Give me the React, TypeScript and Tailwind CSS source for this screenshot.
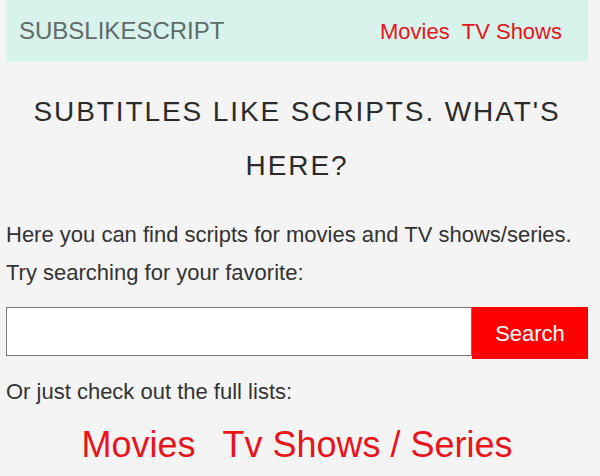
import React from "react";

const App: React.FC = () => {
  return (
    <div className="min-h-[476px] bg-[#f4f4f4] font-['Liberation_Sans',Arial,sans-serif] text-[#333]">
      <div className="ml-[6px] w-[582px]">
        <header className="flex h-[62px] items-center justify-between bg-[#d7f3eb] pl-[13px] pr-[26px]">
          <a className="text-[24px] text-[#5f6b68]">SUBSLIKESCRIPT</a>
          <nav className="flex gap-[12px] text-[22px] text-[#e8141a]">
            <a>Movies</a>
            <a>TV Shows</a>
          </nav>
        </header>

        <h1 className="mt-[23px] px-[10px] text-center text-[28px] leading-[54px] tracking-[1.9px] text-[#2b2b2b]">
          SUBTITLES LIKE SCRIPTS. WHAT'S HERE?
        </h1>

        <div className="mt-[23px] text-[22px] leading-[38px] text-[#333]">
          <p>Here you can find scripts for movies and TV shows/series.</p>
          <p>Try searching for your favorite:</p>
        </div>

        <form className="mt-[15px] flex h-[52px]" onSubmit={(e) => e.preventDefault()}>
          <input
            type="text"
            className="h-[49px] flex-1 border border-[#777] bg-white px-2 text-[20px] outline-none"
          />
          <button className="h-[52px] w-[116px] bg-[#ff0000] text-[22px] text-white">Search</button>
        </form>

        <p className="mt-[13px] text-[22px] leading-[39px] text-[#333]">Or just check out the full lists:</p>

        <div className="mt-[12px] flex justify-center gap-[27px] text-[36px] leading-[44px] text-[#e8141a]">
          <a>Movies</a>
          <a>Tv Shows / Series</a>
        </div>
      </div>
    </div>
  );
};

export default App;
